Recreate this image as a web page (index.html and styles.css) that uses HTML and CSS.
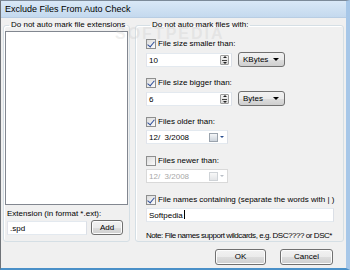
FILE: index.html
```html
<!DOCTYPE html>
<html lang="en">
  <head>
    <meta charset="UTF-8" />
    <title>Exclude Files From Auto Check</title>
    <link rel="stylesheet" href="styles.css">
  </head>
  <body>
    <div class="window">
      <div class="titlebar">Exclude Files From Auto Check</div>

      <div class="dialog-body">
        <fieldset class="group group-ext">
          <legend>Do not auto mark file extensions</legend>
          <div class="listbox"></div>
          <div class="ext-label">Extension (in format *.ext):</div>
          <div class="ext-row">
            <div class="textbox ext-input">.spd</div>
            <div class="btn add-btn">Add</div>
          </div>
        </fieldset>

        <fieldset class="group group-files">
          <legend>Do not auto mark files with:</legend>

          <div class="check checked"><span class="box"></span>File size smaller than:</div>
          <div class="field-row">
            <div class="textbox num-input">10<span class="spin"></span></div>
            <div class="combo">KBytes<span class="arrow"></span></div>
          </div>

          <div class="check checked"><span class="box"></span>File size bigger than:</div>
          <div class="field-row">
            <div class="textbox num-input">6<span class="spin"></span></div>
            <div class="combo">Bytes<span class="arrow"></span></div>
          </div>

          <div class="check checked"><span class="box"></span>Files older than:</div>
          <div class="field-row date-row">
            <div class="textbox date-input">12/&nbsp;&nbsp;3/2008<span class="cal"></span><span class="cal-arrow"></span></div>
          </div>

          <div class="check"><span class="box"></span>Files newer than:</div>
          <div class="field-row date-row">
            <div class="textbox date-input disabled">12/&nbsp;&nbsp;3/2008<span class="cal"></span><span class="cal-arrow"></span></div>
          </div>

          <div class="check checked"><span class="box"></span>File names containing (separate the words with | )</div>
          <div class="field-row">
            <div class="textbox names-input">Softpedia<span class="caret"></span></div>
          </div>

          <div class="note">Note: File names support wildcards, e.g. DSC???? or DSC*</div>
        </fieldset>
      </div>

      <div class="footer">
        <div class="btn ok-btn">OK</div>
        <div class="btn cancel-btn">Cancel</div>
      </div>

      <!-- watermark -->
      <div class="watermark">SOFTPEDIA</div>
    </div>
  </body>
</html>
```

FILE: styles.css
```css
body {
  margin: 0;
  background-color: #f0f0f0;
  font-family: "Liberation Sans", Arial, sans-serif;
  font-size: 8px;
  color: #000;
}
.window {
  position: relative;
  width: 345px;
  height: 267px;
  border-left: 1px solid #6f7378;
  border-right: 4px solid #a7c7e8;
  border-bottom: 2px solid #4a90c8;
  border-top: 1px solid #7c8a99;
  display: flex;
  flex-direction: column;
  background: #f0f0f0;
}
.titlebar {
  height: 17px;
  line-height: 16px;
  padding-left: 4px;
  font-size: 9px;
  color: #000;
  background: linear-gradient(#d9e8f7, #c4d9ee);
  border-bottom: 1px solid #b8cde3;
  box-sizing: border-box;
}
.dialog-body {
  display: flex;
  gap: 5px;
  padding: 2px 2px 0 2px;
  height: 222px;
}
.group {
  margin: 0;
  border: 1px solid #d5dfe5;
  border-radius: 3px;
  box-shadow: inset 1px 1px 0 #fff;
  padding: 0;
  display: flex;
  flex-direction: column;
  min-width: 0;
}
.group legend {
  padding: 0 2px;
  margin-left: 4px;
  line-height: 10px;
  white-space: nowrap;
  color: #000;
}
.group-ext {
  width: 127px;
  box-sizing: border-box;
  padding: 1px 1px 0 1px;
}
.group-files {
  flex: 1;
  padding: 4px 0 0 10px;
}
.listbox {
  height: 172px;
  background: #fff;
  border: 1px solid #828790;
}
.ext-label {
  margin-top: 3px;
  padding-left: 2px;
  line-height: 11px;
}
.ext-row {
  display: flex;
  align-items: center;
  gap: 4px;
  padding-left: 2px;
  margin-top: 1px;
}
.textbox {
  position: relative;
  height: 14px;
  line-height: 13px;
  box-sizing: border-box;
  background: #fff;
  border: 1px solid #abadb3;
  border-top-color: #e3e9ef;
  border-left-color: #e2e3ea;
  border-right-color: #dbdfe6;
  border-bottom-color: #e3e9ef;
  padding-left: 2px;
}
.ext-input {
  width: 80px;
}
.btn {
  box-sizing: border-box;
  height: 15px;
  line-height: 13px;
  text-align: center;
  border: 1px solid #707070;
  border-radius: 3px;
  background: linear-gradient(#f2f2f2 0%, #ebebeb 50%, #dddddd 51%, #cfcfcf 100%);
  box-shadow: inset 0 0 0 1px #fcfcfc;
}
.add-btn {
  width: 32px;
}
.check {
  display: flex;
  align-items: center;
  height: 11px;
  line-height: 11px;
  margin-top: 5px;
  white-space: nowrap;
}
.check:first-of-type {
  margin-top: 4px;
}
.check .box {
  width: 10px;
  height: 10px;
  box-sizing: border-box;
  border: 1px solid #8e8f8f;
  background: linear-gradient(135deg, #dcdcdc, #fbfbfb);
  margin-right: 2px;
  position: relative;
  flex: none;
}
.check.checked .box::after {
  content: "";
  position: absolute;
  left: 2px;
  top: 0px;
  width: 3px;
  height: 6px;
  border-right: 1.5px solid #2d4d9a;
  border-bottom: 1.5px solid #2d4d9a;
  transform: rotate(40deg);
}
.field-row {
  display: flex;
  align-items: center;
  gap: 6px;
  margin-top: 3px;
  margin-bottom: 5px;
}
.date-row {
  margin-bottom: 6px;
}
.num-input {
  width: 86px;
}
.spin {
  position: absolute;
  right: 2px;
  top: 1px;
  width: 9px;
  height: 10px;
  border: 1px solid #9c9c9c;
  border-radius: 1px;
  box-sizing: border-box;
  background:
    linear-gradient(#444, #444) center 4px / 5px 1px no-repeat,
    linear-gradient(#f4f4f4, #d8d8d8);
}
.spin::before,
.spin::after {
  content: "";
  position: absolute;
  left: 2px;
  border-left: 2px solid transparent;
  border-right: 2px solid transparent;
}
.spin::before {
  top: 0px;
  border-bottom: 2px solid #222;
}
.spin::after {
  bottom: 0px;
  border-top: 2px solid #222;
}
.combo {
  position: relative;
  width: 47px;
  height: 15px;
  box-sizing: border-box;
  line-height: 13px;
  padding-left: 4px;
  border: 1px solid #707070;
  border-radius: 3px;
  background: linear-gradient(#f2f2f2 0%, #ebebeb 50%, #dddddd 51%, #cfcfcf 100%);
}
.combo .arrow {
  position: absolute;
  right: 5px;
  top: 5px;
  border-left: 3px solid transparent;
  border-right: 3px solid transparent;
  border-top: 3px solid #000;
}
.date-input {
  width: 82px;
}
.cal {
  position: absolute;
  right: 9px;
  top: 2px;
  width: 7px;
  height: 7px;
  border: 1px solid #9aa3ad;
  background: linear-gradient(#f4f6f8, #cdd4dc);
}
.cal-arrow {
  position: absolute;
  right: 3px;
  top: 5px;
  border-left: 2px solid transparent;
  border-right: 2px solid transparent;
  border-top: 2px solid #2b4f8f;
}
.disabled {
  color: #a8a8a8;
  border-color: #d9d9d9;
}
.disabled .cal {
  border-color: #cfd3d7;
  background: linear-gradient(#f8f8f8, #e4e6e8);
}
.disabled .cal-arrow {
  border-top-color: #b8bec6;
}
.names-input {
  width: 188px;
}
.caret {
  display: inline-block;
  width: 1px;
  height: 9px;
  background: #000;
  vertical-align: -1px;
  margin-left: 1px;
}
.note {
  margin-top: 3px;
  line-height: 11px;
  white-space: nowrap;
  letter-spacing: -0.45px;
}
.footer {
  display: flex;
  justify-content: flex-end;
  gap: 14px;
  padding: 7px 13px 0 0;
}
.ok-btn {
  width: 51px;
  height: 16px;
}
.cancel-btn {
  width: 53px;
  height: 16px;
}
.watermark {
  position: absolute;
  left: 114px;
  top: 24px;
  font-size: 16px;
  letter-spacing: 2px;
  color: rgba(200, 200, 200, 0.3);
  font-weight: bold;
  pointer-events: none;
}
```
